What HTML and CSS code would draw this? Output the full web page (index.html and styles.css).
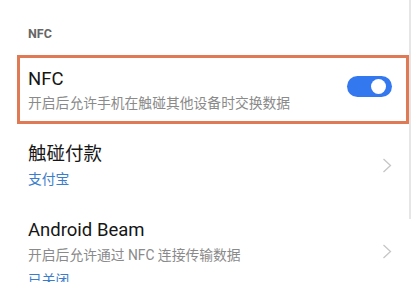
FILE: index.html
```html
<!DOCTYPE html>
<html lang="zh-CN">
<head>
<meta charset="utf-8">
<link rel="stylesheet" href="styles.css">
</head>
<body>
<div class="page">
  <div class="section-title">NFC</div>
  <div class="item highlight">
    <div class="text">
      <div class="title">NFC</div>
      <div class="sub">开启后允许手机在触碰其他设备时交换数据</div>
    </div>
    <div class="switch"><div class="thumb"></div></div>
  </div>
  <div class="item row-pay">
    <div class="text">
      <div class="title">触碰付款</div>
      <div class="sub link">支付宝</div>
    </div>
    <svg class="chev" width="10" height="15" viewBox="0 0 10 15"><polyline points="1.5,1 8.5,7.5 1.5,14" fill="none" stroke="#c6c6c6" stroke-width="1.3"/></svg>
  </div>
  <div class="item row-beam">
    <div class="text">
      <div class="title">Android Beam</div>
      <div class="sub">开启后允许通过 NFC 连接传输数据</div>
      <div class="sub link status">已关闭</div>
    </div>
    <svg class="chev chev-beam" width="10" height="15" viewBox="0 0 10 15"><polyline points="1.5,1 8.5,7.5 1.5,14" fill="none" stroke="#c6c6c6" stroke-width="1.3"/></svg>
  </div>
  <div class="scrollbar"></div>
</div>
</body>
</html>
```
FILE: styles.css
```css
html, body {
  margin: 0;
  padding: 0;
  background: #ffffff;
}
body {
  width: 415px;
  height: 282px;
  overflow: hidden;
  font-family: "Roboto", "Noto Sans CJK SC", sans-serif;
}
.page {
  position: relative;
  height: 282px;
}
.section-title {
  padding: 26px 0 0 28px;
  font-size: 12.5px;
  line-height: 16px;
  font-weight: bold;
  color: #666666;
}
.item {
  display: flex;
  align-items: center;
  justify-content: space-between;
}
.text {
  display: flex;
  flex-direction: column;
}
.title {
  font-size: 18.5px;
  line-height: 24px;
  color: #161616;
}
.sub {
  margin-top: 3px;
  font-size: 13.8px;
  line-height: 20px;
  color: #8a8a8a;
}
.link {
  color: #3b7dca;
}
.highlight {
  margin: 13px 6px 0 17px;
  border: 3px solid #e07a55;
  padding: 9px 14px 8px 8px;
}
.highlight .sub {
  margin-top: 2px;
}
.switch {
  width: 45px;
  height: 21px;
  border-radius: 11px;
  background: #3478f0;
  display: flex;
  align-items: center;
  justify-content: flex-end;
  padding-right: 6px;
  box-sizing: border-box;
  margin-bottom: 7px;
}
.thumb {
  width: 15px;
  height: 15px;
  border-radius: 50%;
  background: #ffffff;
}
.row-pay {
  padding: 18px 23px 14px 28px;
}
.row-beam {
  padding: 15px 23px 0 28px;
}
.status {
  margin-top: 5px;
}
.chev {
  display: block;
}
.chev-beam {
  margin-bottom: 5px;
}
.scrollbar {
  position: absolute;
  top: 0;
  left: 409px;
  width: 2px;
  height: 219px;
  background: #e6e6e6;
}
```
